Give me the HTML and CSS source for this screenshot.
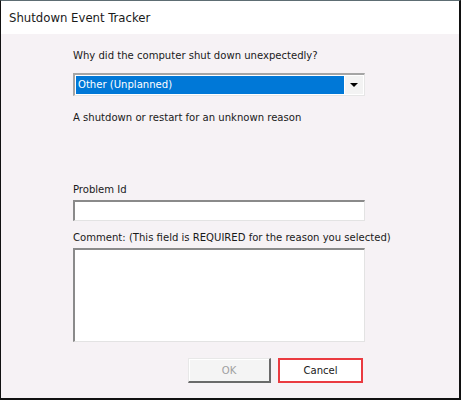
FILE: index.html
```html
<!DOCTYPE html>
<html>
<head>
<meta charset="utf-8">
<link rel="stylesheet" href="styles.css">
</head>
<body>
<div class="window">
  <div class="titlebar">Shutdown Event Tracker</div>
  <div class="content">
    <div class="label first">Why did the computer shut down unexpectedly?</div>
    <div class="select">
      <div class="select-value">Other (Unplanned)</div>
      <div class="select-btn"><span class="arrow"></span></div>
    </div>
    <div class="label desc">A shutdown or restart for an unknown reason</div>
    <div class="label problem">Problem Id</div>
    <div class="input"></div>
    <div class="label comment">Comment: (This field is REQUIRED for the reason you selected)</div>
    <div class="textarea"></div>
    <div class="buttons">
      <div class="btn ok">OK</div>
      <div class="btn cancel">Cancel</div>
    </div>
  </div>
</div>
</body>
</html>
```

FILE: styles.css
```css
* { box-sizing: border-box; }
html, body { margin: 0; padding: 0; background: #ffffff; }
body {
  font-family: "DejaVu Sans Condensed", "DejaVu Sans", "Liberation Sans", sans-serif;
  font-stretch: semi-condensed;
  font-size: 11.2px;
  color: #1a1a1a;
}
.window {
  width: 461px;
  height: 400px;
  background: #f6f2f5;
  border-top: 1px solid #5d6d73;
  border-left: 1px solid #111;
  border-right: 2px solid #111;
  border-bottom: 2px solid #111;
  display: flex;
  flex-direction: column;
}
.titlebar {
  height: 33px;
  background: #ffffff;
  padding-left: 8px;
  display: flex;
  align-items: center;
  font-size: 13px;
  color: #1a1a1a;
}
.content {
  padding-left: 72px;
  width: 366px;
  display: flex;
  flex-direction: column;
}
.label { line-height: 13px; height: 13px; white-space: nowrap; }
.first { margin-top: 15px; }
.select {
  margin-top: 11px;
  height: 23px;
  width: 292px;
  display: flex;
  border-top: 2px solid #a5a5a5;
  border-left: 2px solid #a5a5a5;
  border-right: 1px solid #e6e6e6;
  border-bottom: 1px solid #e6e6e6;
  background: #fff;
  padding: 1px;
}
.select-value {
  flex: 1;
  background: #0078d7;
  color: #fff;
  padding-left: 2px;
  line-height: 18px;
}
.select-btn {
  width: 19px;
  background: #f3f3f3;
  border-left: 1px solid #fff;
  display: flex;
  align-items: center;
  justify-content: center;
}
.arrow {
  width: 0; height: 0;
  border-left: 4px solid transparent;
  border-right: 4px solid transparent;
  border-top: 4px solid #000;
}
.desc { margin-top: 15px; }
.problem { margin-top: 59px; }
.input, .textarea {
  width: 292px;
  background: #fff;
  border-top: 2px solid #8a8a8a;
  border-left: 2px solid #8a8a8a;
  border-right: 1px solid #e3e3e3;
  border-bottom: 1px solid #e3e3e3;
}
.input { margin-top: 4px; height: 21px; }
.comment { margin-top: 10px; }
.textarea { margin-top: 4px; height: 94px; }
.buttons {
  width: 292px;
  margin-top: 16px;
  display: flex;
  justify-content: flex-end;
  gap: 7px;
  padding-right: 2px;
}
.btn {
  height: 25px;
  display: flex;
  align-items: center;
  justify-content: center;
}
.ok {
  width: 83px;
  color: #a0a0a0;
  background: #f4f4f4;
  border-top: 1px solid #e8e8e8;
  border-left: 1px solid #e8e8e8;
  border-right: 2px solid #6a6a6a;
  border-bottom: 2px solid #6a6a6a;
  box-shadow: inset 1px 1px 0 #fff;
}
.cancel {
  width: 85px;
  background: #fff;
  border: 2px solid #ea3a40;
  color: #1a1a1a;
}
```
